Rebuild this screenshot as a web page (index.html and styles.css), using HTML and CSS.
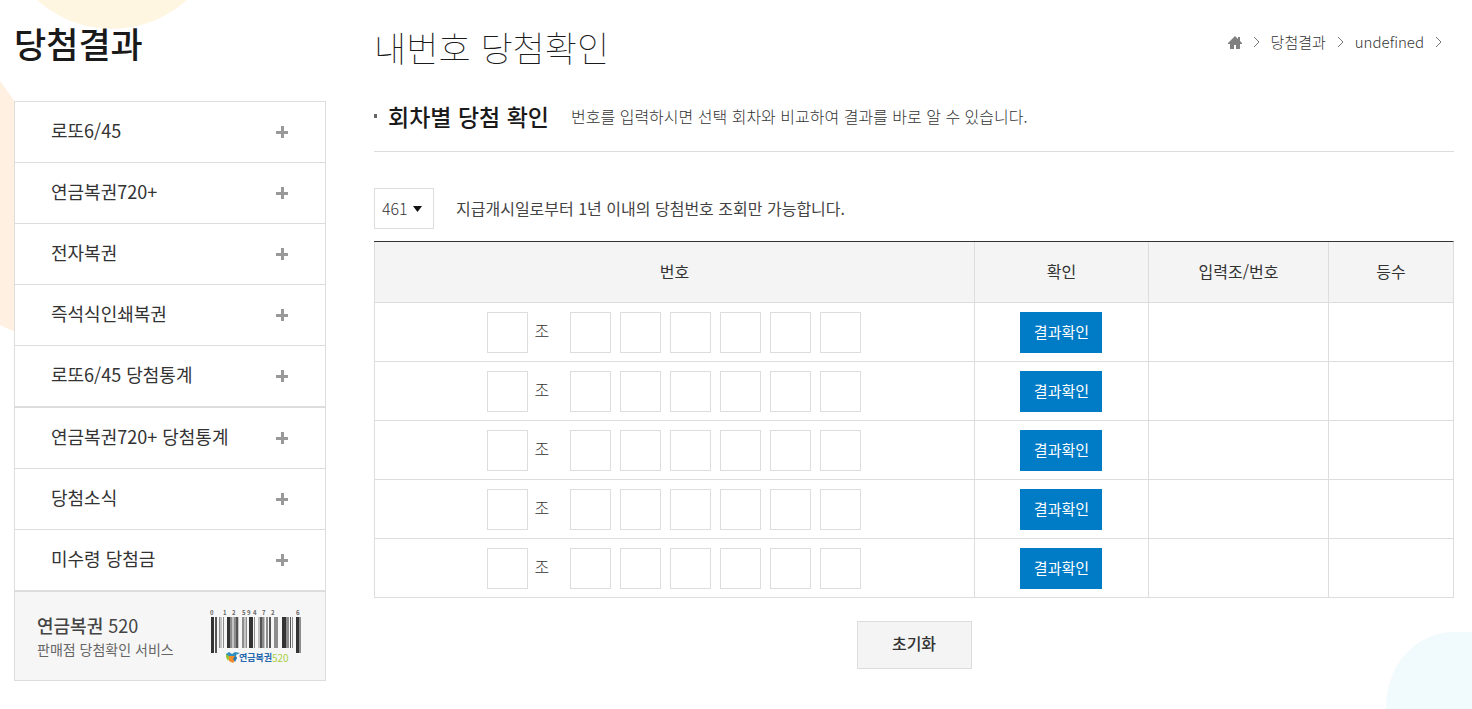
FILE: index.html
```html
<!DOCTYPE html>
<html lang="ko">
<head>
<meta charset="utf-8">
<title>내번호 당첨확인</title>
<link rel="stylesheet" href="styles.css">
</head>
<body>
<div class="decor" aria-hidden="true">
  <svg class="decor-sun" width="224" height="30"><circle cx="112" cy="-82" r="111" fill="#fff6e2"/></svg>
  <svg class="decor-side" width="40" height="260" viewBox="0 80 40 260"><path d="M0 81L40 136V340Q20 335 0 325Z" fill="#fff0e2"/></svg>
  <svg class="decor-sky" width="86" height="77"><path d="M0 77C0 30 32 0 68 0H86V77Z" fill="#f1fafc"/></svg>
</div>
<div class="page">
  <aside class="side">
    <h2 class="side-title">당첨결과</h2>
    <nav>
      <ul class="menu">
        <li><a class="menu-link" href="#">로또6/45<span class="plus"></span></a></li>
        <li><a class="menu-link" href="#">연금복권720+<span class="plus"></span></a></li>
        <li><a class="menu-link" href="#">전자복권<span class="plus"></span></a></li>
        <li><a class="menu-link" href="#">즉석식인쇄복권<span class="plus"></span></a></li>
        <li class="group-end"><a class="menu-link" href="#">로또6/45 당첨통계<span class="plus"></span></a></li>
        <li><a class="menu-link" href="#">연금복권720+ 당첨통계<span class="plus"></span></a></li>
        <li><a class="menu-link" href="#">당첨소식<span class="plus"></span></a></li>
        <li><a class="menu-link" href="#">미수령 당첨금<span class="plus"></span></a></li>
      </ul>
    </nav>
    <a class="banner" href="#">
      <span class="banner-text"><strong class="banner-name">연금복권 <span class="banner-num">520</span></strong><span class="banner-sub">판매점 당첨확인 서비스</span></span>
      <svg class="barcode" width="92" height="62" viewBox="0 -6 92 62">
        <g class="barcode-digits"><text x="0" y="5">0</text><text x="13" y="5">1</text><text x="22" y="5">2</text><text x="32" y="5">5</text><text x="37" y="5">9</text><text x="43" y="5">4</text><text x="52" y="5">7</text><text x="61" y="5">2</text><text x="86" y="5">6</text></g>
        <path fill="#333" d="M1 7h3v36H1zM17 7h3v31h-3zM39 7h4v31h-4zM72 7h4v31h-4zM86 7h3v36h-3z"/>
        <path fill="#555" d="M5 7h2v36H5zM26 7h2v31h-2zM50 7h2v31h-2zM59 7h2v31h-2zM80 7h1v31h-1z"/>
        <path fill="#8d8d8d" d="M9 7h1v31H9zM13 7h1v31h-1zM20 7h2v31h-2zM24 7h2v31h-2zM32 7h2v31h-2zM36 7h1v31h-1zM44 7h1v31h-1zM52 7h2v31h-2zM56 7h2v31h-2zM64 7h4v31h-4zM76 7h3v31h-3zM82 7h1v31h-1zM89 7h2v36h-2z"/>
        <path fill="#c4c4c4" d="M10 7h2v31h-2zM22 7h2v31h-2zM28 7h1v31h-1zM34 7h2v31h-2zM48 7h2v31h-2zM54 7h1v31h-1z"/>
        <path fill="#338fc0" d="M16 44l3-2 3 2 3-2 5 1-4 2 1 4-6-3-5 1z"/>
        <path fill="#9ac52f" d="M16 44l4 3-2 4-2-4z"/>
        <path fill="#f48b28" d="M19 46h6l1 3-3 4-4-2z"/>
        <path fill="#2878b2" d="M25 46l2 2-2 4-2-3z"/>
        <text class="logo-ko" x="29" y="51">연금복권</text><text class="logo-num" x="62" y="52">520</text>
      </svg>
    </a>
  </aside>
  <main class="main">
    <header class="main-head">
      <h1 class="main-title">내번호 당첨확인</h1>
      <nav class="crumbs">
        <a href="#" aria-label="홈"><svg class="crumb-home" width="14" height="13" viewBox="0 0 14 13"><path fill="#808080" d="M7 0L0 7v1h2v5h4V9h2v4h4V8h2V7l-2-2V1h-2v2z"/></svg></a>
        <svg class="chev" width="7" height="12" viewBox="0 0 7 12"><path d="M1 1l5 5-5 5"/></svg>
        <a href="#">당첨결과</a>
        <svg class="chev" width="7" height="12" viewBox="0 0 7 12"><path d="M1 1l5 5-5 5"/></svg>
        <a href="#">undefined</a>
        <svg class="chev" width="7" height="12" viewBox="0 0 7 12"><path d="M1 1l5 5-5 5"/></svg>
      </nav>
    </header>
    <div class="section-head">
      <h3 class="section-title">회차별 당첨 확인</h3>
      <p class="section-desc">번호를 입력하시면 선택 회차와 비교하여 결과를 바로 알 수 있습니다.</p>
    </div>
    <div class="filter">
      <select class="round" id="round"><option>461</option></select>
      <label class="filter-note" for="round">지급개시일로부터 1년 이내의 당첨번호 조회만 가능합니다.</label>
    </div>
    <table class="check">
      <colgroup><col class="col-num"><col class="col-btn"><col class="col-in"><col class="col-rank"></colgroup>
      <thead><tr><th>번호</th><th>확인</th><th>입력조/번호</th><th>등수</th></tr></thead>
      <tbody>
        <tr><td><div class="numbers"><input class="digit" id="g1"><label class="unit" for="g1">조</label><input class="digit" aria-label="1"><input class="digit" aria-label="2"><input class="digit" aria-label="3"><input class="digit" aria-label="4"><input class="digit" aria-label="5"><input class="digit" aria-label="6"></div></td><td><button class="btn" type="button">결과확인</button></td><td></td><td></td></tr>
        <tr><td><div class="numbers"><input class="digit" id="g2"><label class="unit" for="g2">조</label><input class="digit" aria-label="1"><input class="digit" aria-label="2"><input class="digit" aria-label="3"><input class="digit" aria-label="4"><input class="digit" aria-label="5"><input class="digit" aria-label="6"></div></td><td><button class="btn" type="button">결과확인</button></td><td></td><td></td></tr>
        <tr><td><div class="numbers"><input class="digit" id="g3"><label class="unit" for="g3">조</label><input class="digit" aria-label="1"><input class="digit" aria-label="2"><input class="digit" aria-label="3"><input class="digit" aria-label="4"><input class="digit" aria-label="5"><input class="digit" aria-label="6"></div></td><td><button class="btn" type="button">결과확인</button></td><td></td><td></td></tr>
        <tr><td><div class="numbers"><input class="digit" id="g4"><label class="unit" for="g4">조</label><input class="digit" aria-label="1"><input class="digit" aria-label="2"><input class="digit" aria-label="3"><input class="digit" aria-label="4"><input class="digit" aria-label="5"><input class="digit" aria-label="6"></div></td><td><button class="btn" type="button">결과확인</button></td><td></td><td></td></tr>
        <tr><td><div class="numbers"><input class="digit" id="g5"><label class="unit" for="g5">조</label><input class="digit" aria-label="1"><input class="digit" aria-label="2"><input class="digit" aria-label="3"><input class="digit" aria-label="4"><input class="digit" aria-label="5"><input class="digit" aria-label="6"></div></td><td><button class="btn" type="button">결과확인</button></td><td></td><td></td></tr>
      </tbody>
    </table>
    <div class="actions"><button class="reset" type="button">초기화</button></div>
  </main>
</div>
</body>
</html>
```
FILE: styles.css
```css
* { box-sizing: border-box; }
body {
  margin: 0;
  background: #fff;
  color: #333;
  font-family: "Noto Sans CJK KR", sans-serif;
  font-size: 16px;
  line-height: 24px;
}
h1, h2, h3, p, ul { margin: 0; padding: 0; }
ul { list-style: none; }
a { color: inherit; text-decoration: none; }
input, button, select { font: inherit; color: inherit; margin: 0; border-radius: 0; }

.decor-sun, .decor-side, .decor-sky { position: absolute; z-index: -1; }
.decor-sun { top: 0; left: 0; }
.decor-side { top: 80px; left: 0; }
.decor-sky { right: 0; top: 632px; }

.page { display: flex; gap: 48px; padding: 20px 18px 0 14px; }
.side { flex: 0 0 312px; }
.main { flex: 1; min-width: 0; }

.side-title { height: 81px; font-size: 35px; font-weight: 500; line-height: 46px; color: #1a1a1a; }
.menu { border: 1px solid #ddd; border-bottom: 0; background: #fff; font-size: 18px; }
.menu li { border-bottom: 1px solid #ddd; }
.menu .group-end { border-bottom-width: 2px; }
.menu-link { display: flex; align-items: center; justify-content: space-between; height: 60px; padding: 0 37px 4px 36px; }
.plus {
  width: 12px;
  height: 12px;
  margin-top: 4px;
  background:
    linear-gradient(#999, #999) center / 12px 3px no-repeat,
    linear-gradient(#999, #999) center / 3px 12px no-repeat;
}
.banner {
  display: flex;
  justify-content: space-between;
  height: 90px;
  padding: 12px 23px 0 22px;
  border: 1px solid #ddd;
  background: #f6f6f6;
}
.banner-text { display: flex; flex-direction: column; padding-top: 9px; }
.banner-name { font-size: 18px; font-weight: 500; line-height: 25px; color: #444; }
.banner-num { font-weight: 400; }
.banner-sub { font-size: 14px; line-height: 22px; color: #666; }
.barcode { display: block; overflow: visible; }
.barcode-digits { font-size: 6px; font-weight: 700; fill: #666; }
.logo-ko { font-size: 9px; font-weight: 700; fill: #2868ae; }
.logo-num { font-size: 10px; fill: #a8cf45; }

.main-head { display: flex; justify-content: space-between; height: 72px; }
.main-title { font-size: 35px; font-weight: 100; line-height: 54px; color: #1a1a1a; }
.crumbs { display: flex; align-items: center; gap: 11px; height: 44px; padding-right: 12px; font-size: 15px; font-weight: 300; }
.crumb-home { display: block; }
.chev { fill: none; stroke: #777; stroke-width: 1; }
.section-head { display: flex; gap: 22px; height: 60px; padding-top: 8px; border-bottom: 1px solid #ddd; }
.section-title { display: flex; align-items: center; gap: 11px; height: 32px; font-size: 23px; font-weight: 500; color: #1a1a1a; }
.section-title::before { content: ""; width: 3px; height: 4px; background: #666; }
.section-desc { line-height: 32px; font-weight: 300; color: #333; }
.filter { display: flex; align-items: center; gap: 22px; padding-top: 36px; }
.round {
  width: 60px;
  height: 41px;
  padding: 0 7px 2px;
  border: 1px solid #ddd;
  appearance: none;
  font-weight: 300;
  background: url("data:image/svg+xml,%3Csvg xmlns='http://www.w3.org/2000/svg' width='10' height='6'%3E%3Cpath d='M0 0h9L4.500 6z' fill='%23111'/%3E%3C/svg%3E") 38px 17px no-repeat #fff;
}
.filter-note { padding-bottom: 2px; color: #444; }

.check { width: 100%; margin-top: 12px; border: solid #ddd; border-width: 1px 1px 0 0; border-top-color: #333; border-spacing: 0; table-layout: fixed; }
.col-num { width: 55.6%; }
.col-btn { width: 16.13%; }
.col-in { width: 16.68%; }
.check th, .check td { padding: 0; border: solid #ddd; border-width: 0 0 1px 1px; text-align: center; }
.check th { height: 61px; padding-bottom: 2px; background: #f4f4f4; font-weight: 400; }
.check td { height: 59px; }
.numbers { display: flex; justify-content: center; align-items: center; }
.digit { width: 41px; height: 41px; padding: 0; border: 1px solid #ddd; background: #fff; text-align: center; }
.digit + .digit { margin-left: 9px; }
.unit { width: 42px; padding: 0 0 4px 6px; text-align: left; font-weight: 300; }
.btn { width: 82px; height: 41px; padding: 0; border: 0; background: #007bc6; color: #fff; font-size: 15px; vertical-align: middle; }
.actions { padding-top: 23px; text-align: center; }
.reset { width: 115px; height: 48px; padding: 0 0 4px; border: 1px solid #ddd; background: #f4f4f4; font-weight: 500; vertical-align: top; }
```
